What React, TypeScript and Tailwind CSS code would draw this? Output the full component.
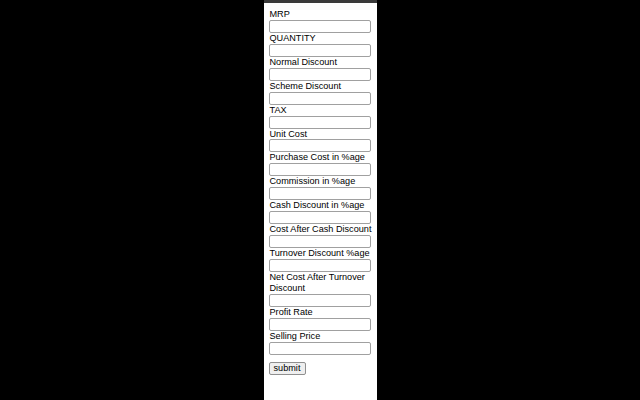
const fields = [
  "MRP",
  "QUANTITY",
  "Normal Discount",
  "Scheme Discount",
  "TAX",
  "Unit Cost",
  "Purchase Cost in %age",
  "Commission in %age",
  "Cash Discount in %age",
  "Cost After Cash Discount",
  "Turnover Discount %age",
  "Net Cost After Turnover Discount",
  "Profit Rate",
  "Selling Price",
];

export default function App() {
  return (
    <div
      className="flex h-[400px] w-[640px] justify-center overflow-hidden bg-black"
      style={{ fontFamily: '"Liberation Sans", Arial, sans-serif' }}
    >
      <div className="flex w-[113px] flex-col">
        <div className="h-[3px] bg-[#3a3a3a]" />
        <form className="flex flex-1 flex-col bg-white pl-[5px] pr-[4px] pt-[6px] text-[9.15px] leading-[10.9px] text-black">
          {fields.map((name) => (
            <div key={name} className="flex flex-col">
              <label className="block pl-[1px]">{name}</label>
              <input
                type="text"
                className="h-[13px] w-[102px] rounded-[2px] border border-[#a0a0a0] bg-white"
              />
            </div>
          ))}
          <div className="mt-[7px]">
            <button
              type="submit"
              className="h-[13px] w-[37px] rounded-[2px] border border-[#8f8f8f] bg-[#efefef] text-[9.15px] leading-[11px]"
            >
              submit
            </button>
          </div>
        </form>
      </div>
    </div>
  );
}
